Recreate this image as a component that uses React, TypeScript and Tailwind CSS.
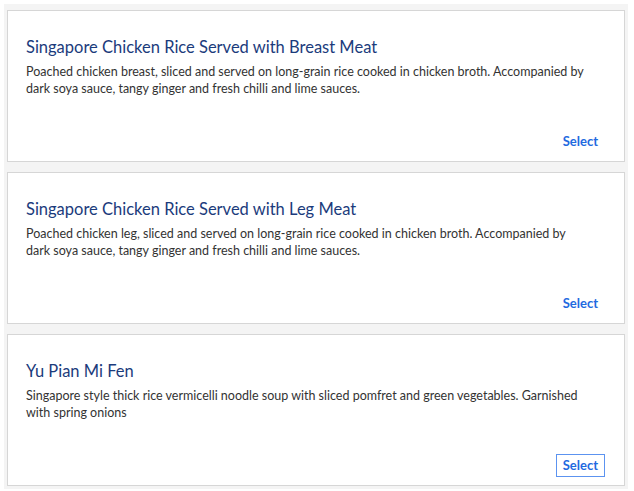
const dishes = [
  {
    name: 'Singapore Chicken Rice Served with Breast Meat',
    desc: 'Poached chicken breast, sliced and served on long-grain rice cooked in chicken broth. Accompanied by dark soya sauce, tangy ginger and fresh chilli and lime sauces.',
  },
  {
    name: 'Singapore Chicken Rice Served with Leg Meat',
    desc: 'Poached chicken leg, sliced and served on long-grain rice cooked in chicken broth. Accompanied by dark soya sauce, tangy ginger and fresh chilli and lime sauces.',
  },
  {
    name: 'Yu Pian Mi Fen',
    desc: 'Singapore style thick rice vermicelli noodle soup with sliced pomfret and green vegetables. Garnished with spring onions',
    focused: true,
  },
];

const App = () => {
  return (
    <div className="w-[634px] h-[491px] bg-white pl-1 pr-[6px] pt-1 font-['Lato','Liberation_Sans',sans-serif]">
      <div className="h-[485px] bg-[#f4f4f4] pt-[6px] px-[3px] flex flex-col gap-[10px]">
        {dishes.map((d) => (
          <div
            key={d.name}
            className="h-[152px] bg-white border border-[#d6d6d6] flex flex-col pl-[18px] pr-[18px] pt-[26px] pb-[8px]"
          >
            <h2 className="text-[16.5px] leading-[20px] text-[#1b3b7c]">{d.name}</h2>
            <p className="mt-[6px] pr-[16px] text-[12.5px] leading-[17px] text-[#333333]">{d.desc}</p>
            <div className="mt-auto flex justify-end">
              <button
                className={
                  d.focused
                    ? 'text-[13px] font-bold text-[#1f6ae0] px-[6px] py-[1px] border border-[#5c93f0] mr-[1px]'
                    : 'text-[13px] font-bold text-[#1f6ae0] px-[6px] py-[1px] border border-transparent mr-[1px]'
                }
              >
                Select
              </button>
            </div>
          </div>
        ))}
      </div>
    </div>
  );
};

export default App;
